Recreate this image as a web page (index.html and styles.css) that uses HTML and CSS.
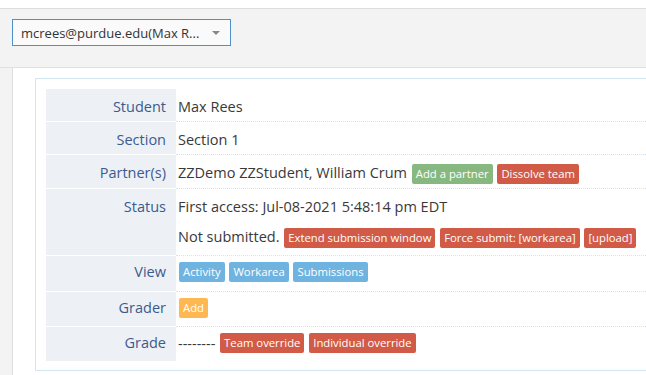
FILE: index.html
```html
<!DOCTYPE html>
<html lang="en">
<head>
    <meta charset="UTF-8">
    <title>Student submission</title>
    <link rel="stylesheet" href="styles.css">
</head>
<body>
    <div class="page">
        <!-- Student picker -->
        <div class="toolbar">
            <div class="picker">
                <span class="picker-text">mcrees@purdue.edu(Max R...</span>
                <span class="caret"></span>
            </div>
        </div>

        <!-- Info panel -->
        <div class="content">
            <div class="box">
                <div class="info">
                    <div class="info-row">
                        <div class="info-name">Student</div>
                        <div class="info-value">Max Rees</div>
                    </div>
                    <div class="info-row">
                        <div class="info-name">Section</div>
                        <div class="info-value">Section 1</div>
                    </div>
                    <div class="info-row">
                        <div class="info-name">Partner(s)</div>
                        <div class="info-value">ZZDemo ZZStudent, William Crum <span class="tag tag-green">Add a partner</span> <span class="tag tag-red">Dissolve team</span></div>
                    </div>
                    <div class="info-row">
                        <div class="info-name">Status</div>
                        <div class="info-value info-status">
                            <div class="line">First access: Jul-08-2021 5:48:14 pm EDT</div>
                            <div class="line line-second">Not submitted. <span class="tag tag-red">Extend submission window</span> <span class="tag tag-red">Force submit: [workarea]</span> <span class="tag tag-red">[upload]</span></div>
                        </div>
                    </div>
                    <div class="info-row row-tags row-tall">
                        <div class="info-name">View</div>
                        <div class="info-value"><span class="tag tag-blue">Activity</span> <span class="tag tag-blue">Workarea</span> <span class="tag tag-blue">Submissions</span></div>
                    </div>
                    <div class="info-row row-tags">
                        <div class="info-name">Grader</div>
                        <div class="info-value"><span class="tag tag-orange">Add</span></div>
                    </div>
                    <div class="info-row row-tags">
                        <div class="info-name">Grade</div>
                        <div class="info-value">-------- <span class="tag tag-red">Team override</span> <span class="tag tag-red">Individual override</span></div>
                    </div>
                </div>
            </div>
        </div>
    </div>
</body>
</html>
```

FILE: styles.css
```css
/* Global */
html, body {
    overflow: hidden;
}

body {
    margin: 0;
    background: #ffffff;
    font-family: 'Open Sans', 'Noto Sans', sans-serif;
    font-size: 14.5px;
    color: #393939;
}

.page {
    margin-top: 8px;
    border-top: 1px solid #dddddd;
    background: #f3f3f3;
    height: 400px;
}

/* Toolbar with picker */
.toolbar {
    padding: 10px 12px 0;
    border-bottom: 1px solid #e0e0e0;
    box-sizing: border-box;
    height: 59px;
}

.picker {
    width: 219px;
    height: 27px;
    box-sizing: border-box;
    border: 1px solid #4d90cc;
    background: #fafafa;
    display: flex;
    align-items: center;
    padding: 0 10px 0 8px;
    color: #333333;
    font-size: 13px;
}

.picker-text {
    flex: 1;
    white-space: nowrap;
    overflow: hidden;
}

.caret {
    flex-shrink: 0;
    width: 0;
    height: 0;
    border-left: 4px solid transparent;
    border-right: 4px solid transparent;
    border-top: 4px solid #888888;
}

/* Content area */
.content {
    margin-left: 12px;
    border-left: 1px solid #e0e0e0;
    background: #ffffff;
    padding: 10px 0 0 22px;
    height: 320px;
}

.box {
    width: 680px;
    border: 1px solid #d5e6f3;
    padding: 10px 0 9px 10px;
}

/* Info table */
.info-row {
    display: flex;
}

.info-name {
    width: 130px;
    flex-shrink: 0;
    box-sizing: border-box;
    background: #edf1f5;
    color: #3c5a8e;
    text-align: right;
    padding: 8px 10px 4px 4px;
    line-height: 20px;
    border-top: 1px solid #ffffff;
}

.info-value {
    flex: 1;
    padding: 8px 4px 4px 2px;
    line-height: 20px;
    border-top: 1px dotted #d5e4f1;
    white-space: nowrap;
}

.info-row:first-child .info-name,
.info-row:first-child .info-value {
    border-top: none;
}

.info-status {
    padding-bottom: 7px;
}

.line-second {
    margin-top: 10px;
}

/* Rows holding only tags */
.row-tags .info-name {
    padding-top: 6px;
}

.row-tags .info-value {
    padding-top: 6px;
    padding-bottom: 7px;
    line-height: 21px;
}

.row-tags .tag {
    vertical-align: top;
}

.row-tall .info-value {
    padding-bottom: 8px;
}

/* Tags */
.tag {
    display: inline-block;
    font-size: 11.3px;
    line-height: 20px;
    padding: 0 4px;
    color: #ffffff;
    border-radius: 2px;
    margin-left: 1px;
    vertical-align: middle;
}

.tag-green {
    background: #87b87f;
}

.tag-red {
    background: #d15b47;
}

.tag-blue {
    background: #6fb3e0;
}

.tag-orange {
    background: #ffb752;
}
```
